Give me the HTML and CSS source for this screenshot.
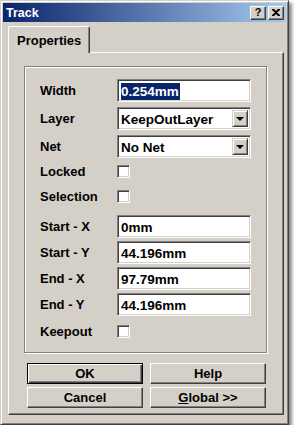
FILE: index.html
```html
<!DOCTYPE html>
<html>
<head>
<meta charset="utf-8">
<link rel="stylesheet" href="styles.css">
</head>
<body>
<div class="window">
  <div class="titlebar">
    <span class="title">Track</span>
    <div class="tbtns">
      <span class="tbtn">?</span>
      <span class="tbtn x">
        <svg width="8" height="7" viewBox="0 0 8 7"><path d="M0 0h2l2 2 2-2h2v1L5 3.5 8 6v1H6L4 5 2 7H0V6l3-2.5L0 1z" fill="#000"/></svg>
      </span>
    </div>
  </div>
  <div class="body">
    <div class="tabs"><div class="tab">Properties</div></div>
    <div class="page">
      <div class="group">
        <div class="row r1"><span class="lbl">Width</span><div class="edit"><span class="sel">0.254mm</span></div></div>
        <div class="row r2"><span class="lbl">Layer</span><div class="edit combo"><span>KeepOutLayer</span><span class="drop"><i></i></span></div></div>
        <div class="row r2"><span class="lbl">Net</span><div class="edit combo"><span>No Net</span><span class="drop"><i></i></span></div></div>
        <div class="row rc1"><span class="lbl">Locked</span><span class="check"></span></div>
        <div class="row rc2"><span class="lbl">Selection</span><span class="check"></span></div>
        <div class="row rs"><span class="lbl">Start - X</span><div class="edit">0mm</div></div>
        <div class="row rt"><span class="lbl">Start - Y</span><div class="edit">44.196mm</div></div>
        <div class="row rt"><span class="lbl">End - X</span><div class="edit">97.79mm</div></div>
        <div class="row rt"><span class="lbl">End - Y</span><div class="edit">44.196mm</div></div>
        <div class="row rk"><span class="lbl">Keepout</span><span class="check"></span></div>
      </div>
      <div class="buttons">
        <button class="btn default">OK</button>
        <button class="btn">Help</button>
        <button class="btn">Cancel</button>
        <button class="btn"><u>G</u>lobal &gt;&gt;</button>
      </div>
    </div>
  </div>
</div>
</body>
</html>
```
FILE: styles.css
```css
html, body {
  margin: 0;
  padding: 0;
  background: #ffffff;
}
body {
  font-family: "Liberation Sans", Arial, sans-serif;
  font-weight: bold;
  font-size: 13px;
  color: #000;
}
.window {
  width: 289px;
  height: 425px;
  box-sizing: border-box;
  background: #d4d0c8;
  border: 1px solid;
  border-color: #d4d0c8 #404040 #404040 #d4d0c8;
  box-shadow: inset 1px 1px #ffffff, inset -1px -1px #808080, 3px 3px 3px rgba(0,0,0,0.45);
  padding: 2px;
  display: flex;
  flex-direction: column;
}
.titlebar {
  height: 19px;
  background: linear-gradient(to right, #0a246a, #a6caf0);
  display: flex;
  align-items: center;
  justify-content: space-between;
  padding: 0 2px 0 2px;
}
.title {
  color: #fff;
  font-size: 12.5px;
  font-weight: bold;
  padding-left: 1px;
}
.tbtns {
  display: flex;
  gap: 2px;
}
.tbtn {
  width: 16px;
  height: 14px;
  box-sizing: border-box;
  background: #d4d0c8;
  border: 1px solid;
  border-color: #fff #404040 #404040 #fff;
  box-shadow: inset -1px -1px #808080;
  display: flex;
  align-items: center;
  justify-content: center;
  font-size: 11px;
  line-height: 1;
}
.body {
  flex: 1;
  padding: 4px 2px 7px 5px;
  display: flex;
  flex-direction: column;
}
.tabs {
  display: flex;
  height: 26px;
  position: relative;
  z-index: 1;
}
.tab {
  width: 82px;
  box-sizing: border-box;
  border: 1px solid;
  border-bottom: none;
  border-color: #fff #404040 #d4d0c8 #fff;
  box-shadow: inset -1px 0 #808080;
  border-radius: 2px 2px 0 0;
  background: #d4d0c8;
  font-size: 13px;
  padding: 6px 0 0 8px;
  height: 27px;
}
.page {
  flex: 1;
  box-sizing: border-box;
  border: 1px solid;
  border-color: #fff #404040 #404040 #fff;
  box-shadow: inset -1px -1px #808080;
  padding: 13px 16px 0 15px;
  display: flex;
  flex-direction: column;
}
.group {
  border: 1px solid #808080;
  box-shadow: 1px 1px #fff, inset 1px 1px #fff;
  padding: 12px 15px 14px 15px;
  display: flex;
  flex-direction: column;
}
.row {
  display: flex;
  align-items: center;
  height: 23px;
}
.r2 { margin-top: 5px; }
.rc1 { height: 13px; margin-top: 7px; }
.rc2 { height: 13px; margin-top: 12px; }
.rs { margin-top: 12px; }
.rt { margin-top: 3px; }
.rk { height: 13px; margin-top: 9px; }
.lbl {
  width: 77px;
  flex: none;
}
.edit {
  width: 135px;
  height: 23px;
  box-sizing: border-box;
  background: #fff;
  border: 1px solid;
  border-color: #808080 #fff #fff #808080;
  box-shadow: inset 1px 1px #404040, inset -1px -1px #d4d0c8;
  padding: 2px 3px 0 3px;
  display: flex;
  align-items: center;
  font-size: 13.5px;
  line-height: 17px;
}
.sel {
  background: #0a246a;
  color: #fff;
  padding: 0 1px 0 0;
}
.combo {
  justify-content: space-between;
  padding-right: 2px;
}
.drop {
  width: 16px;
  height: 17px;
  box-sizing: border-box;
  background: #d4d0c8;
  border: 1px solid;
  border-color: #d4d0c8 #404040 #404040 #d4d0c8;
  box-shadow: inset 1px 1px #fff, inset -1px -1px #808080;
  display: flex;
  align-items: center;
  justify-content: center;
  margin-top: -2px;
}
.drop i {
  width: 0;
  height: 0;
  border-left: 4px solid transparent;
  border-right: 4px solid transparent;
  border-top: 4px solid #000;
  display: block;
  margin-top: 1px;
}
.check {
  width: 13px;
  height: 13px;
  box-sizing: border-box;
  background: #fff;
  border: 1px solid;
  border-color: #808080 #fff #fff #808080;
  box-shadow: inset 1px 1px #404040, inset -1px -1px #d4d0c8;
}
.buttons {
  display: grid;
  grid-template-columns: 116px 116px;
  column-gap: 7px;
  row-gap: 3px;
  margin-top: 10px;
  margin-left: 3px;
}
.btn {
  height: 21px;
  box-sizing: border-box;
  background: #d4d0c8;
  border: 1px solid;
  border-color: #fff #404040 #404040 #fff;
  box-shadow: inset -1px -1px #808080;
  font-family: "Liberation Sans", Arial, sans-serif;
  font-weight: bold;
  font-size: 13px;
  color: #000;
  padding: 0;
}
.btn.default {
  border: 1px solid #000;
  box-shadow: inset 1px 1px #fff, inset -1px -1px #404040, inset -2px -2px #808080;
}
```
